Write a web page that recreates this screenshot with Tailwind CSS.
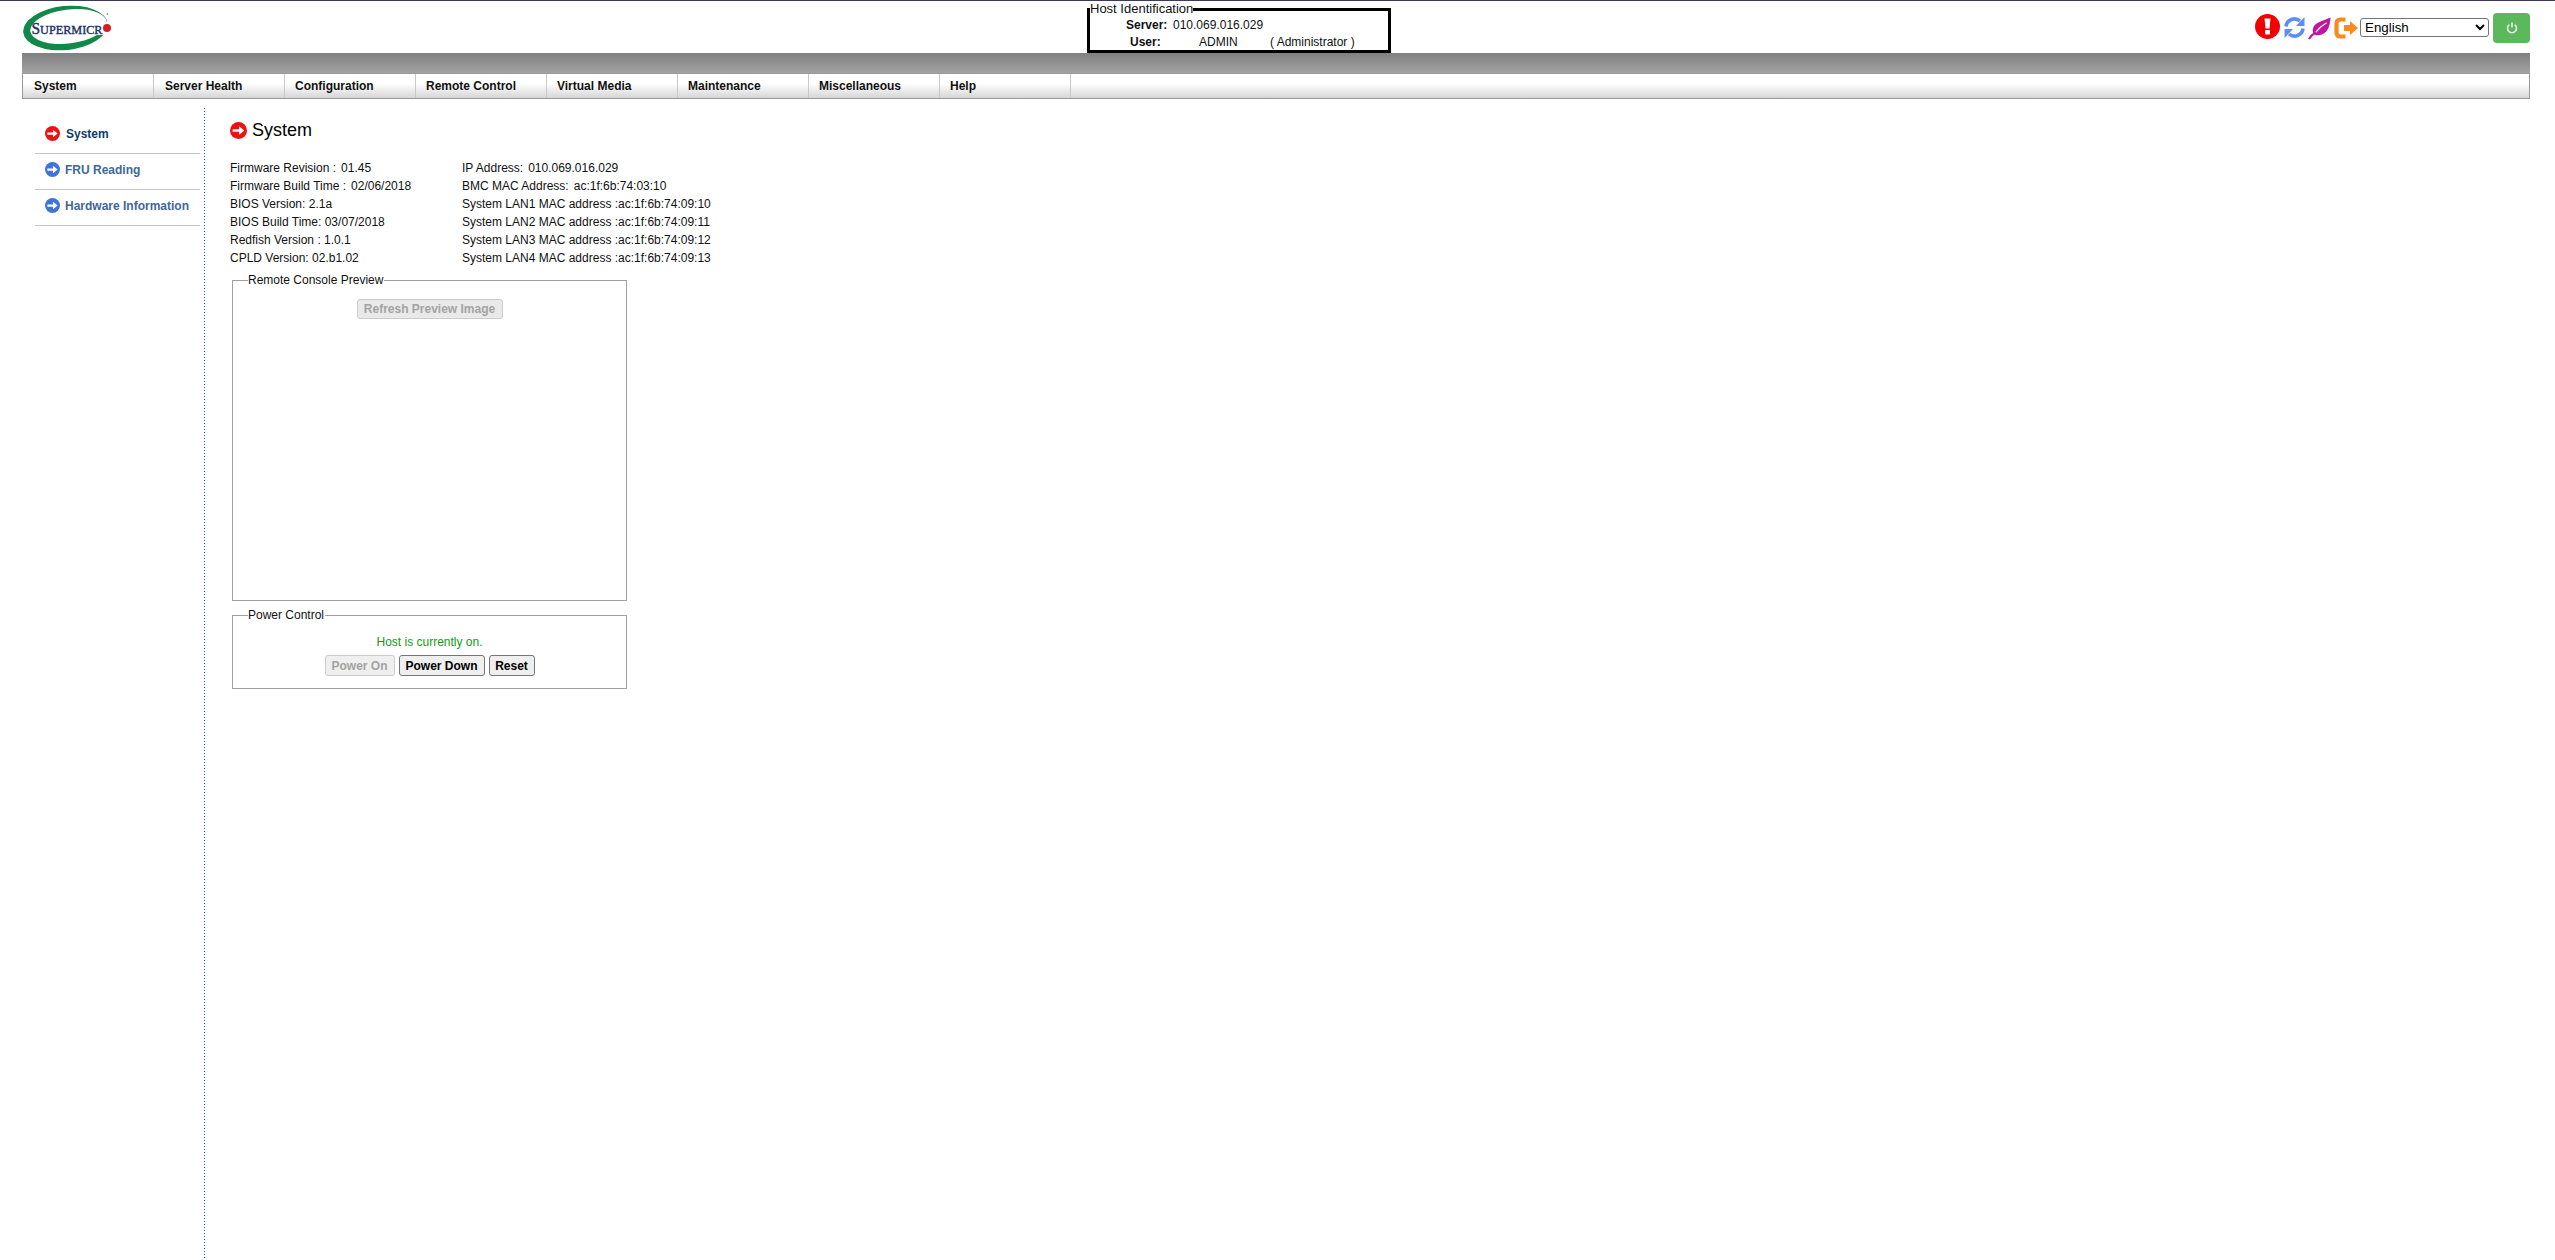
<!DOCTYPE html>
<html lang="en">
<head>
  <meta charset="UTF-8">
  <title>Supermicro BMC - System</title>
  <script src="https://cdn.jsdelivr.net/npm/@tailwindcss/browser@4"></script>
</head>
<body class="h-[1260px] overflow-hidden bg-white font-['Liberation_Sans',Arial,sans-serif] text-[12px] leading-[18px] text-[#111]">
  <!-- Header -->
  <header class="flex h-[53px] border-t border-[#3c3a5c] pl-[23px]">
    <svg class="mt-[4px] h-[46px] w-[90px] shrink-0" viewBox="0 0 90 46">
      <ellipse cx="42.5" cy="23" rx="42.5" ry="22" transform="rotate(-6 42.5 23)" fill="#12884a"/>
      <ellipse cx="45.5" cy="21.5" rx="38.5" ry="17" transform="rotate(-7 45.5 21.5)" fill="#fff"/>
      <rect x="72" y="17" width="18" height="13" fill="#fff"/>
      <text x="8.5" y="28.5" textLength="71" lengthAdjust="spacingAndGlyphs" font-family="Liberation Serif" font-size="13" stroke="#1c2f66" stroke-width="0.4" fill="#1c2f66"><tspan font-size="16.5">S</tspan>UPERMICR</text>
      <circle cx="84" cy="23" r="4" fill="#d31f26"/>
      <circle cx="84.500" cy="9" r="1" fill="#9aa5a0"/>
    </svg>

    <fieldset class="ml-[974px] h-[52px] w-[304px] shrink-0 border-[3px] border-black">
      <legend class="ml-0 text-[13px] leading-[16px]">Host Identification</legend>
      <div class="flex pl-[36px] leading-[16px]">
        <span class="w-[47px] font-bold">Server:</span><span>010.069.016.029</span>
      </div>
      <div class="mt-px flex pl-[40px] leading-[16px]">
        <span class="w-[69px] font-bold">User:</span><span class="w-[71px]">ADMIN</span><span>( Administrator )</span>
      </div>
    </fieldset>

    <div class="ml-auto mt-[12px] mr-[25px] flex h-[30px] items-center">
      <svg class="mb-[3px] h-[25px] w-[25px]" viewBox="0 0 25 25">
        <circle cx="12.500" cy="12.500" r="12.500" fill="#f50000"/>
        <path d="M9.500 4.500h6l-1 10h-4z" fill="#fff"/>
        <rect x="10" y="16" width="5" height="4.500" rx="0.800" fill="#fff"/>
      </svg>
      <svg class="ml-[4px] mb-[1px] h-[23px] w-[21px]" viewBox="0 0 21 23" fill="none">
        <path d="M2 10.500A8.500 8.500 0 0 1 16 5" stroke="#5c8ef2" stroke-width="3.600"/>
        <path d="M20.500 1v9h-8.500z" fill="#5c8ef2"/>
        <path d="M19 12.500A8.500 8.500 0 0 1 5 18" stroke="#5c8ef2" stroke-width="3.600"/>
        <path d="M.5 22v-9H9z" fill="#5c8ef2"/>
      </svg>
      <svg class="ml-[3px] mb-[1px] h-[24px] w-[23px]" viewBox="0 0 24 24" fill="none">
        <path d="M23.500 1C23 9 21 18.500 11 19.500 7 20 4.500 17.500 5 13.500 6 6 15 5 23.500 1z" fill="#c0159c"/>
        <path d="M8 16.500C11 12.500 15 9 19.500 6.500" stroke="#fff" stroke-width="1.300"/>
        <path d="M1 23.500C3 20 5.500 18 8 16.500" stroke="#c0159c" stroke-width="2.200"/>
      </svg>
      <svg class="ml-[3px] mb-[1px] h-[22px] w-[24px]" viewBox="0 0 24 22" fill="none">
        <path d="M11.500 2.500H6.500Q2.500 2.500 2.500 6.500V15.500Q2.500 19.500 6.500 19.500H11.500" stroke="#f88b1c" stroke-width="4.200"/>
        <path d="M10 8H16V4L24 11 16 18V14H10z" fill="#f88b1c"/>
      </svg>
      <select class="ml-[2px] mb-[1px] h-[19px] w-[129px] rounded-[3px] border border-[#767676] bg-white text-[13.33px] leading-[15px] text-black">
        <option>English</option>
      </select>
      <button class="ml-[4px] flex h-[30px] w-[37px] items-center justify-center rounded-[4px] bg-[#5cb85c]">
        <svg class="h-[12px] w-[12px]" viewBox="0 0 12 12" fill="none" stroke="#e4f3e4" stroke-width="1.600">
          <path d="M3.300 2.600a4.500 4.500 0 1 0 5.400 0"/>
          <path d="M6 .6v4.600"/>
        </svg>
      </button>
    </div>
  </header>

  <!-- Gray strip and main menu -->
  <div class="ml-[22px] mr-[25px]">
    <div class="h-[20px] bg-gradient-to-b from-[#808080] to-[#a2a2a2]"></div>
    <nav class="flex h-[26px] border border-[#999] bg-gradient-to-b from-white from-40% to-[#d6d6d6] font-bold">
      <a href="#" class="flex w-[131px] items-center border-r border-[#c8c8c8] pl-[11px]">System</a>
      <a href="#" class="flex w-[131px] items-center border-r border-[#c8c8c8] pl-[11px]">Server Health</a>
      <a href="#" class="flex w-[131px] items-center border-r border-[#c8c8c8] pl-[10px]">Configuration</a>
      <a href="#" class="flex w-[131px] items-center border-r border-[#c8c8c8] pl-[10px]">Remote Control</a>
      <a href="#" class="flex w-[131px] items-center border-r border-[#c8c8c8] pl-[10px]">Virtual Media</a>
      <a href="#" class="flex w-[131px] items-center border-r border-[#c8c8c8] pl-[10px]">Maintenance</a>
      <a href="#" class="flex w-[131px] items-center border-r border-[#c8c8c8] pl-[10px]">Miscellaneous</a>
      <a href="#" class="flex w-[131px] items-center border-r border-[#c8c8c8] pl-[10px]">Help</a>
    </nav>
  </div>

  <div class="mt-[9px] flex h-[1152px]">
    <!-- Sidebar -->
    <aside class="h-full w-[204px] shrink-0 pl-[35px] pr-[4px] pt-[10px]">
      <ul class="font-bold">
        <li class="flex h-[36px] items-center border-b border-[#c4c4c4] pb-[4px] pl-[10px] text-[#0f3d66]">
          <svg class="h-[15px] w-[15px]" viewBox="0 0 16 16"><circle cx="8" cy="8" r="8" fill="#ee1111"/><path d="M2.500 6.800h6V4l5 4-5 4V9.200h-6z" fill="#fff"/></svg>
          <span class="ml-[6px]">System</span>
        </li>
        <li class="flex h-[36px] items-center border-b border-[#c4c4c4] pb-[4px] pl-[10px] text-[#3f6799]">
          <svg class="h-[15px] w-[15px]" viewBox="0 0 16 16"><circle cx="8" cy="8" r="8" fill="#3f74d8"/><path d="M2.500 6.800h6V4l5 4-5 4V9.200h-6z" fill="#fff"/></svg>
          <span class="ml-[5px]">FRU Reading</span>
        </li>
        <li class="flex h-[36px] items-center border-b border-[#c4c4c4] pb-[4px] pl-[10px] text-[#3f6799]">
          <svg class="h-[15px] w-[15px]" viewBox="0 0 16 16"><circle cx="8" cy="8" r="8" fill="#3f74d8"/><path d="M2.500 6.800h6V4l5 4-5 4V9.200h-6z" fill="#fff"/></svg>
          <span class="ml-[5px]">Hardware Information</span>
        </li>
      </ul>
    </aside>
    <div class="h-full w-px shrink-0 bg-[repeating-linear-gradient(to_bottom,#1a5f9e_0,#1a5f9e_1px,transparent_1px,transparent_3px)]"></div>

    <!-- Main content -->
    <main class="pl-[25px] pt-[12px]">
      <h1 class="flex h-[20px] items-center text-[18px] font-normal leading-[20px] text-black">
        <svg class="h-[17px] w-[17px]" viewBox="0 0 16 16"><circle cx="8" cy="8" r="8" fill="#ee1111"/><path d="M2.500 6.800h6V4l5 4-5 4V9.200h-6z" fill="#fff"/></svg>
        <span class="ml-[5px]">System</span>
      </h1>

      <div class="mt-[19px] flex">
        <div class="w-[232px]">
          <p>Firmware Revision :<span class="ml-[5px]">01.45</span></p>
          <p>Firmware Build Time :<span class="ml-[5px]">02/06/2018</span></p>
          <p>BIOS Version: 2.1a</p>
          <p>BIOS Build Time: 03/07/2018</p>
          <p>Redfish Version : 1.0.1</p>
          <p>CPLD Version: 02.b1.02</p>
        </div>
        <div>
          <p>IP Address:<span class="ml-[5px]">010.069.016.029</span></p>
          <p>BMC MAC Address:<span class="ml-[5px]">ac:1f:6b:74:03:10</span></p>
          <p>System LAN1 MAC address :ac:1f:6b:74:09:10</p>
          <p>System LAN2 MAC address :ac:1f:6b:74:09:11</p>
          <p>System LAN3 MAC address :ac:1f:6b:74:09:12</p>
          <p>System LAN4 MAC address :ac:1f:6b:74:09:13</p>
        </div>
      </div>

      <fieldset class="ml-[2px] mt-[5px] h-[329px] w-[395px] border border-[#a0a0a0]">
        <legend class="ml-[15px] pr-px leading-[16px]">Remote Console Preview</legend>
        <div class="mt-[11px] flex justify-center">
          <button disabled class="h-[20px] w-[146px] rounded-[3px] border border-[#cccccc] bg-[#e9e9e9] font-bold leading-[18px] text-[#a3a3a3]">Refresh Preview Image</button>
        </div>
      </fieldset>

      <fieldset class="ml-[2px] mt-[6px] h-[82px] w-[395px] border border-[#a0a0a0]">
        <legend class="ml-[15px] pr-px leading-[16px]">Power Control</legend>
        <p class="mt-[11px] text-center leading-[16px] text-[#159a15]">Host is currently on.</p>
        <div class="mt-[5px] flex justify-center gap-[4px] font-bold">
          <button disabled class="h-[21px] w-[70px] rounded-[3px] border border-[#cccccc] bg-[#efefef] text-[#a3a3a3]">Power On</button>
          <button class="h-[21px] w-[86px] rounded-[3px] border border-[#767676] bg-[#efefef] text-black">Power Down</button>
          <button class="h-[21px] w-[46px] rounded-[3px] border border-[#767676] bg-[#efefef] text-black">Reset</button>
        </div>
      </fieldset>
    </main>
  </div>
</body>
</html>
